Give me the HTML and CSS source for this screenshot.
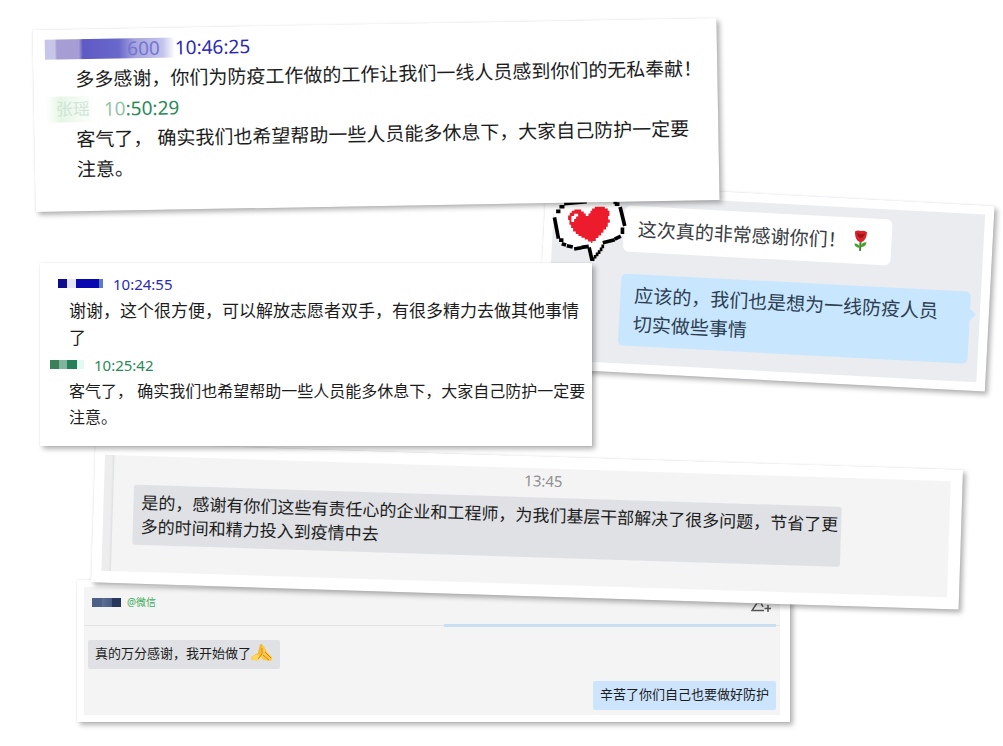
FILE: index.html
```
<!DOCTYPE html>
<html lang="zh-CN">
<head>
    <meta charset="UTF-8">
    <title>聊天记录</title>
    <link rel="stylesheet" href="styles.css">
</head>
<body>
    <main class="board">
        <!-- 群聊窗口 -->
        <article class="card card-group">
            <header class="group-header">
                <div class="group-name">
                    <span class="mask mask-navy"></span>
                    <span class="group-source">@微信</span>
                </div>
                <svg class="add-icon" viewBox="0 0 20 18" fill="none" stroke="#555" stroke-width="1.5">
                    <circle cx="8" cy="5" r="4"/>
                    <path d="M6 9L1 16.500H13M10 9L12 13M17 11v7M13.500 14.500h6.500"/>
                </svg>
            </header>
            <div class="group-chat">
                <div class="bubble bubble-small">
                    <p>真的万分感谢，我开始做了</p>
                    <svg class="hands" viewBox="0 0 22 20">
                        <path d="M9 1.500Q11 0 12 3L14 9L7 16L1 17L0 14L7 10Z" fill="#f5b82e"/>
                        <path d="M11 4Q13 2 14 5L16 9L21 14Q22 17 19 18L12 17L9 12Z" fill="#fbc944"/>
                        <path d="M0 14L7 11L10 15L6 18L2 17Z" fill="#ffd75a"/>
                        <path d="M11 5L11 11L7 16M12 12L18 17M14 9L20 15" fill="none" stroke="#d9831c" stroke-width="1"/>
                    </svg>
                </div>
                <div class="bubble bubble-small bubble-mine">
                    <p>辛苦了你们自己也要做好防护</p>
                </div>
            </div>
        </article>

        <!-- 工程师感谢 -->
        <article class="card card-engineer">
            <div class="engineer-chat">
                <time class="chat-time">13:45</time>
                <div class="bubble bubble-wide">
                    <p>是的，感谢有你们这些有责任心的企业和工程师，为我们基层干部解决了很多问题，节省了更<br>多的时间和精力投入到疫情中去</p>
                </div>
            </div>
        </article>

        <!-- 微信对话 -->
        <article class="card card-wechat">
            <svg class="avatar" viewBox="0 0 240 200">
                <path d="M42 36L66 20L110 12L225 15L240 50L256 108L246 140L190 160L156 208L147 172L102 178L70 166L55 146L42 88Z" fill="#fff"/>
                <g fill="none" stroke="#000" stroke-width="11">
                    <path d="M72 43L140 37M58 52h15M48 66h13M43 84L55 148M57 152h13M65 163l13 4M80 169l18 4M102 179l22-4M124 174l22-3"/>
                    <path d="M147 174L156 214M155 209h8M161 202h8M167 195h8M173 188h8M179 180h8M184 171h8"/>
                    <path d="M188 160l36-9M224 149l18-9M247 134v-20M254 110L240 53M224 44h14M220 38h10"/>
                </g>
                <path d="M84 78h5v-8h6v-6h8v-4h20v6h8v6h6v8h8v-8h6v-8h5v-7h8v-5h30v5h9v7h5v16h-4v10h5v10h-6v12h-5v8h-8v10h-7v8h-8v8h-8v9h-10v6h-4v-5h-9v-6h-10v-5h-10v-5h-9v-6h-8v-8h-8v-10h-6v-10h-5v-14h-4z" fill="#ec1c2c"/>
                <path d="M94 88v-8h8v-7h12v8h-6v8h-6v9h-8z" fill="#fff"/>
            </svg>
            <div class="wechat-chat">
                <div class="bubble bubble-white">
                    <p>这次真的非常感谢你们！</p>
                    <svg class="rose" viewBox="0 0 14 22">
                        <path d="M7 10v11" stroke="#3f8b2d" stroke-width="2"/>
                        <path d="M7 18Q1 18 1 14Q6 14 7 18ZM7 17Q8 12 13 12Q13 17 7 17Z" fill="#4f9e35"/>
                        <path d="M1 2Q3 0 7 1Q11 0 13 2Q13 8 10 11Q7 13 4 11Q1 8 1 2Z" fill="#d8232a"/>
                        <path d="M3 3Q7 6 11 3Q10 7 7 8Q4 7 3 3Z" fill="#9e1119"/>
                    </svg>
                </div>
                <div class="bubble bubble-blue">
                    <p>应该的，我们也是想为一线防疫人员<br>切实做些事情</p>
                </div>
            </div>
        </article>

        <!-- 志愿者感谢 -->
        <article class="card card-volunteer">
            <header class="sender sender-blue">
                <span class="mask mask-blue"></span>
                <time>10:24:55</time>
            </header>
            <p class="message message-large">谢谢，这个很方便，可以解放志愿者双手，有很多精力去做其他事情<br>了</p>
            <header class="sender sender-green">
                <span class="mask mask-green"></span>
                <time>10:25:42</time>
            </header>
            <p class="message">客气了， 确实我们也希望帮助一些人员能多休息下，大家自己防护一定要<br>注意。</p>
        </article>

        <!-- 一线人员感谢 -->
        <article class="card card-frontline">
            <header class="sender sender-blue">
                <span class="smear smear-blue">600</span>
                <time>10:46:25</time>
            </header>
            <p class="message">多多感谢，你们为防疫工作做的工作让我们一线人员感到你们的无私奉献！</p>
            <header class="sender sender-green">
                <span class="smear smear-green">张瑶</span>
                <time><span class="faded">10</span>:50:29</time>
            </header>
            <p class="message">客气了， 确实我们也希望帮助一些人员能多休息下，大家自己防护一定要<br>注意。</p>
        </article>
    </main>
</body>
</html>
```
FILE: styles.css
```
* {
    box-sizing: border-box;
    margin: 0;
    padding: 0;
}

body {
    background: #fff;
    color: #1c1c1c;
    font-family: "Noto Sans", "Noto Sans CJK SC", sans-serif;
}

.board {
    position: relative;
    min-height: 746px;
    overflow: hidden;
}

/* 散落的卡片 */
.card {
    position: absolute;
    background: #fff;
    box-shadow: 3px 3px 5px rgba(0,0,0,0.3), 0 0 1px rgba(0,0,0,0.15);
}

.message,
.bubble {
    white-space: nowrap;
}

.sender {
    display: flex;
    align-items: center;
}

.sender-blue {
    color: #2a2ab4;
}

.sender-green {
    color: #2a8a57;
}

.mask {
    display: block;
    height: 9px;
}

/* 一线人员 */
.card-frontline {
    left: 34px;
    top: 24px;
    width: 684px;
    height: 182px;
    padding: 5px 12px;
    transform: rotate(-1deg);
}

.card-frontline .sender {
    height: 30px;
    font-size: 19px;
    line-height: 22px;
}

.card-frontline .message {
    padding-left: 30px;
    font-size: 19px;
    line-height: 30px;
}

.smear {
    height: 20px;
    line-height: 20px;
    text-align: right;
}

.smear-blue {
    width: 130px;
    padding-right: 15px;
    background: linear-gradient(90deg, #c8c6e8 0, #c8c6e8 10px, #a59dd4 12px, #a59dd4 34px, #5f5ac4 38px, #6a68cb 74px, #a5a4e0 90px, #c4c4ec 118px, #fff 130px);
    color: #7674cc;
}

.smear-green {
    width: 50px;
    height: 26px;
    padding-right: 6px;
    margin-right: 8px;
    background: linear-gradient(90deg, #fff, #e6f6e6 30%, #f4fbf4 70%, #fff);
    color: #cfe5d6;
    font-size: 17px;
    line-height: 26px;
}

.faded {
    color: #93c5a8;
}

/* 志愿者 */
.card-volunteer {
    left: 40px;
    top: 263px;
    width: 552px;
    height: 183px;
    padding: 7px 10px;
}

.card-volunteer .sender {
    height: 27px;
    gap: 10px;
    font-size: 15px;
}

.card-volunteer .sender-blue {
    padding-left: 8px;
}

.card-volunteer .message {
    padding-left: 19px;
    font-size: 16px;
    line-height: 26px;
}

.card-volunteer .message-large {
    font-size: 17px;
    line-height: 27px;
}

.mask-blue {
    width: 45px;
    background: linear-gradient(90deg, #0c0c8c 9px, #e4e6f6 9px, #e4e6f6 18px, #0808b0 18px, #0808b0 41px, #5c78c8 41px);
}

.mask-green {
    width: 34px;
    background: linear-gradient(90deg, #3a8058 9px, #7fb39b 9px, #7fb39b 17px, #238058 17px, #238058 27px, #e2faf2 27px);
}

/* 微信 */
.card-wechat {
    left: 541px;
    top: 194px;
    width: 449px;
    height: 186px;
    padding: 9px;
    transform: rotate(3deg);
}

.wechat-chat {
    display: flex;
    flex-direction: column;
    align-items: flex-start;
    gap: 22px;
    height: 100%;
    padding: 10px 0 0 71px;
    background: #ebecf0;
}

.avatar {
    position: absolute;
    left: -4px;
    top: 5px;
    width: 80px;
    height: 67px;
    overflow: visible;
    transform: rotate(-3deg);
}

.bubble-white {
    display: flex;
    align-items: center;
    gap: 7px;
    width: 268px;
    height: 46px;
    padding-left: 14px;
    border-radius: 6px;
    background: #fff;
    color: #3a3d42;
    font-size: 19px;
    line-height: 29px;
}

.rose {
    width: 14px;
    height: 22px;
}

.bubble-blue {
    position: relative;
    width: 350px;
    padding: 7px 14px;
    border-radius: 5px;
    background: #c9e6ff;
    color: #2c3e50;
    font-size: 19px;
    line-height: 29px;
}

.bubble-blue::after {
    position: absolute;
    content: "";
    top: 17px;
    right: -6px;
    border: 6px solid transparent;
    border-left-color: #c9e6ff;
    border-right: none;
}

/* 工程师 */
.card-engineer {
    left: 93px;
    top: 456px;
    width: 868px;
    height: 140px;
    padding: 12px 12px 12px 10px;
    transform: rotate(1.8deg);
}

.engineer-chat {
    height: 100%;
    padding-left: 20px;
    background: linear-gradient(90deg, #ededee 7px, #e0e1e2 9px, #f4f4f5 10px);
}

.chat-time {
    display: block;
    padding: 0 0 4px 12px;
    color: #8f8f8f;
    font-size: 15px;
    line-height: 25px;
    text-align: center;
}

.bubble-wide {
    width: 708px;
    padding: 6px 0 6px 8px;
    margin-left: 10px;
    border-radius: 3px;
    background: #dfe1e5;
    font-size: 17px;
    line-height: 24px;
}

/* 群聊 */
.card-group {
    left: 77px;
    top: 580px;
    width: 713px;
    height: 142px;
    padding: 7px 10px 7px 7px;
}

.group-header {
    position: relative;
    display: flex;
    justify-content: space-between;
    height: 39px;
    padding: 7px 9px 0 8px;
    border-bottom: 1px solid #e2e3e4;
    background: #f4f4f5;
}

.group-header::after {
    position: absolute;
    content: "";
    right: 4px;
    bottom: -2px;
    width: 332px;
    height: 3px;
    background: #cbdff3;
}

.group-name {
    display: flex;
    align-items: center;
    gap: 6px;
    height: 16px;
}

.mask-navy {
    width: 29px;
    background: linear-gradient(90deg, #4c6088 10px, #5c7096 10px, #465a82 20px, #26365c 20px);
}

.group-source {
    color: #3cae5c;
    font-size: 10px;
    line-height: 16px;
}

.add-icon {
    width: 20px;
    height: 18px;
}

.group-chat {
    display: flex;
    flex-direction: column;
    align-items: flex-start;
    gap: 12px;
    height: 89px;
    padding: 14px 4px 0;
    background: #f4f4f5;
}

.bubble-small {
    display: flex;
    align-items: center;
    height: 29px;
    padding: 0 7px 3px;
    border-radius: 2px;
    background: #dfe1e4;
    font-size: 13px;
    line-height: 20px;
}

.bubble-mine {
    align-self: flex-end;
    background: #cce4fc;
}

.hands {
    width: 22px;
    height: 20px;
}
```
